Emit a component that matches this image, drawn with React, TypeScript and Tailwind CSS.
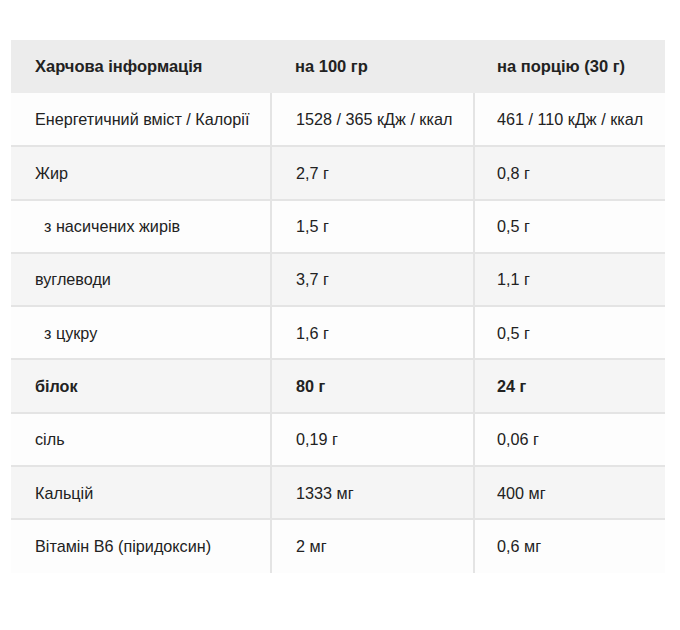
const rows: { name: string; per100: string; serving: string; indent?: boolean; bold?: boolean }[] = [
  { name: 'Енергетичний вміст / Калорії', per100: '1528 / 365 кДж / ккал', serving: '461 / 110 кДж / ккал' },
  { name: 'Жир', per100: '2,7 г', serving: '0,8 г' },
  { name: 'з насичених жирів', per100: '1,5 г', serving: '0,5 г', indent: true },
  { name: 'вуглеводи', per100: '3,7 г', serving: '1,1 г' },
  { name: 'з цукру', per100: '1,6 г', serving: '0,5 г', indent: true },
  { name: 'білок', per100: '80 г', serving: '24 г', bold: true },
  { name: 'сіль', per100: '0,19 г', serving: '0,06 г' },
  { name: 'Кальцій', per100: '1333 мг', serving: '400 мг' },
  { name: 'Вітамін В6 (піридоксин)', per100: '2 мг', serving: '0,6 мг' },
];

export default function App() {
  return (
    <div className="min-h-[630px] w-[680px] bg-white pt-[40px] pl-[11px] font-['Liberation_Sans',Arial,sans-serif] text-[16.2px] text-[#222]">
      <table className="w-[654px] table-fixed border-collapse whitespace-nowrap">
        <colgroup>
          <col className="w-[260px]" />
          <col className="w-[203px]" />
          <col className="w-[191px]" />
        </colgroup>
        <thead>
          <tr className="h-[53px] bg-[#ececec] text-[16.5px] font-bold">
            <th className="pl-6 pr-1 text-left">Харчова інформація</th>
            <th className="pl-6 pr-1 text-left">на 100 гр</th>
            <th className="pl-[23px] pr-1 text-left">на порцію (30 г)</th>
          </tr>
        </thead>
        <tbody>
          {rows.map((r, i) => (
            <tr
              key={r.name}
              className={`h-[53.3px] ${i % 2 === 0 ? 'bg-[#fdfdfd]' : 'bg-[#f5f5f5]'} ${i < rows.length - 1 ? 'border-b-2 border-[#e4e4e4]' : ''} ${r.bold ? 'font-bold' : ''}`}
            >
              <td className={r.indent ? 'pl-[33px] pr-1' : 'pl-6 pr-1'}>{r.name}</td>
              <td className="border-l-2 border-[#e4e4e4] pl-6 pr-1">{r.per100}</td>
              <td className="border-l-2 border-[#e4e4e4] pl-[22px] pr-1">{r.serving}</td>
            </tr>
          ))}
        </tbody>
      </table>
    </div>
  );
}
